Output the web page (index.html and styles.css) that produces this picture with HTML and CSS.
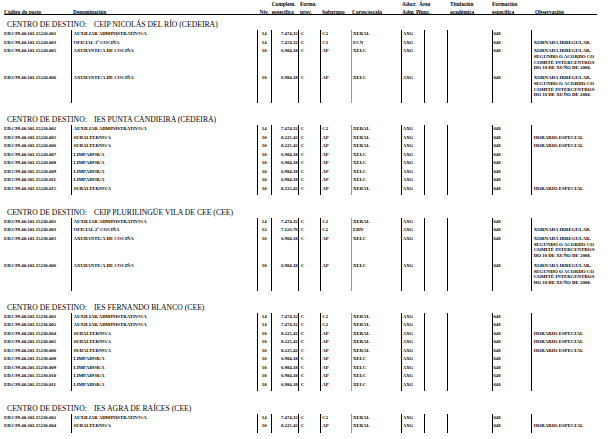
FILE: index.html
```html
<!DOCTYPE html>
<html lang="gl">
<head>
<meta charset="utf-8">
<title>Relación de postos</title>
<link rel="stylesheet" href="styles.css">
</head>
<body>
<div class="page">
  <div class="head">
    <div class="low">Código do posto</div>
    <div class="low">Denominación</div>
    <div class="low">Niv.</div>
    <div>Complem.<br>específico</div>
    <div>Forma<br>prov.</div>
    <div class="low">Subgrupo</div>
    <div class="low">Corpo/escala</div>
    <div>Adscr.<br>Adm. P.</div>
    <div>Área<br>func.</div>
    <div>Titulación<br>académica</div>
    <div>Formación<br>específica</div>
    <div class="low">Observación</div>
  </div>

  <section class="section">
    <h2 class="title"><span class="lbl">CENTRO DE DESTINO:</span>CEIP NICOLÁS DEL RÍO (CEDEIRA)</h2>
    <div class="rows">
      <div>ED.C99.40.101.15220.001</div><div>AUXILIAR ADMINISTRATIVO/A</div><div>14</div><div>7.474,32</div><div>C</div><div>C2</div><div>XERAL</div><div>AXG</div><div></div><div></div><div>648</div><div></div>
      <div>ED.C99.40.101.15220.003</div><div>OFICIAL 1ª COCIÑA</div><div>14</div><div>7.474,32</div><div>C</div><div>C1</div><div>ECN</div><div>AXG</div><div></div><div></div><div>648</div><div>XORNADA IRREGULAR.</div>
      <div>ED.C99.40.101.15220.005</div><div>AXUDANTE/A DE COCIÑA</div><div>10</div><div>6.984,18</div><div>C</div><div>AP</div><div>XELC</div><div>AXG</div><div></div><div></div><div>648</div><div class="multi">XORNADA IRREGULAR,<br>SEGUNDO O ACORDO CO<br>COMITÉ INTERCENTROS<br>DO 10 DE XUÑO DE 2008.</div>
      <div>ED.C99.40.101.15220.006</div><div>AXUDANTE/A DE COCIÑA</div><div>10</div><div>6.984,18</div><div>C</div><div>AP</div><div>XELC</div><div>AXG</div><div></div><div></div><div>648</div><div class="multi">XORNADA IRREGULAR,<br>SEGUNDO O ACORDO CO<br>COMITÉ INTERCENTROS<br>DO 10 DE XUÑO DE 2008.</div>
    </div>
  </section>

  <section class="section">
    <h2 class="title"><span class="lbl">CENTRO DE DESTINO:</span>IES PUNTA CANDIEIRA (CEDEIRA)</h2>
    <div class="rows">
      <div>ED.C99.40.301.15220.002</div><div>AUXILIAR ADMINISTRATIVO/A</div><div>14</div><div>7.474,32</div><div>C</div><div>C2</div><div>XERAL</div><div>AXG</div><div></div><div></div><div>648</div><div></div>
      <div>ED.C99.40.301.15220.005</div><div>SUBALTERNO/A</div><div>10</div><div>8.225,42</div><div>C</div><div>AP</div><div>XERAL</div><div>AXG</div><div></div><div></div><div>648</div><div>HORARIO ESPECIAL</div>
      <div>ED.C99.40.301.15220.006</div><div>SUBALTERNO/A</div><div>10</div><div>8.225,42</div><div>C</div><div>AP</div><div>XERAL</div><div>AXG</div><div></div><div></div><div>648</div><div>HORARIO ESPECIAL</div>
      <div>ED.C99.40.301.15220.007</div><div>LIMPADOR/A</div><div>10</div><div>6.984,18</div><div>C</div><div>AP</div><div>XELC</div><div>AXG</div><div></div><div></div><div>648</div><div></div>
      <div>ED.C99.40.301.15220.008</div><div>LIMPADOR/A</div><div>10</div><div>6.984,18</div><div>C</div><div>AP</div><div>XELC</div><div>AXG</div><div></div><div></div><div>648</div><div></div>
      <div>ED.C99.40.301.15220.009</div><div>LIMPADOR/A</div><div>10</div><div>6.984,18</div><div>C</div><div>AP</div><div>XELC</div><div>AXG</div><div></div><div></div><div>648</div><div></div>
      <div>ED.C99.40.301.15220.011</div><div>LIMPADOR/A</div><div>10</div><div>6.984,18</div><div>C</div><div>AP</div><div>XELC</div><div>AXG</div><div></div><div></div><div>648</div><div></div>
      <div>ED.C99.40.301.15220.015</div><div>SUBALTERNO/A</div><div>10</div><div>8.225,42</div><div>C</div><div>AP</div><div>XERAL</div><div>AXG</div><div></div><div></div><div>648</div><div>HORARIO ESPECIAL</div>
    </div>
  </section>

  <section class="section">
    <h2 class="title"><span class="lbl">CENTRO DE DESTINO:</span>CEIP PLURILINGÜE VILA DE CEE (CEE)</h2>
    <div class="rows">
      <div>ED.C99.40.101.15230.001</div><div>AUXILIAR ADMINISTRATIVO/A</div><div>14</div><div>7.474,32</div><div>C</div><div>C2</div><div>XERAL</div><div>AXG</div><div></div><div></div><div>648</div><div></div>
      <div>ED.C99.40.101.15230.003</div><div>OFICIAL 2ª COCIÑA</div><div>12</div><div>7.123,76</div><div>C</div><div>C2</div><div>EDN</div><div>AXG</div><div></div><div></div><div>648</div><div>XORNADA IRREGULAR.</div>
      <div>ED.C99.40.101.15230.005</div><div>AXUDANTE/A DE COCIÑA</div><div>10</div><div>6.984,18</div><div>C</div><div>AP</div><div>XELC</div><div>AXG</div><div></div><div></div><div>648</div><div class="multi">XORNADA IRREGULAR,<br>SEGUNDO O ACORDO CO<br>COMITÉ INTERCENTROS<br>DO 10 DE XUÑO DE 2008.</div>
      <div>ED.C99.40.101.15230.006</div><div>AXUDANTE/A DE COCIÑA</div><div>10</div><div>6.984,18</div><div>C</div><div>AP</div><div>XELC</div><div>AXG</div><div></div><div></div><div>648</div><div class="multi">XORNADA IRREGULAR,<br>SEGUNDO O ACORDO CO<br>COMITÉ INTERCENTROS<br>DO 10 DE XUÑO DE 2008.</div>
    </div>
  </section>

  <section class="section">
    <h2 class="title"><span class="lbl">CENTRO DE DESTINO:</span>IES FERNANDO BLANCO (CEE)</h2>
    <div class="rows">
      <div>ED.C99.40.201.15230.001</div><div>AUXILIAR ADMINISTRATIVO/A</div><div>14</div><div>7.474,32</div><div>C</div><div>C2</div><div>XERAL</div><div>AXG</div><div></div><div></div><div>648</div><div></div>
      <div>ED.C99.40.201.15230.002</div><div>AUXILIAR ADMINISTRATIVO/A</div><div>14</div><div>7.474,32</div><div>C</div><div>C2</div><div>XERAL</div><div>AXG</div><div></div><div></div><div>648</div><div></div>
      <div>ED.C99.40.201.15230.004</div><div>SUBALTERNO/A</div><div>10</div><div>8.225,42</div><div>C</div><div>AP</div><div>XERAL</div><div>AXG</div><div></div><div></div><div>648</div><div>HORARIO ESPECIAL</div>
      <div>ED.C99.40.201.15230.005</div><div>SUBALTERNO/A</div><div>10</div><div>8.225,42</div><div>C</div><div>AP</div><div>XERAL</div><div>AXG</div><div></div><div></div><div>648</div><div>HORARIO ESPECIAL</div>
      <div>ED.C99.40.201.15230.006</div><div>SUBALTERNO/A</div><div>10</div><div>8.225,42</div><div>C</div><div>AP</div><div>XERAL</div><div>AXG</div><div></div><div></div><div>648</div><div>HORARIO ESPECIAL</div>
      <div>ED.C99.40.201.15230.008</div><div>LIMPADOR/A</div><div>10</div><div>6.984,18</div><div>C</div><div>AP</div><div>XELC</div><div>AXG</div><div></div><div></div><div>648</div><div></div>
      <div>ED.C99.40.201.15230.009</div><div>LIMPADOR/A</div><div>10</div><div>6.984,18</div><div>C</div><div>AP</div><div>XELC</div><div>AXG</div><div></div><div></div><div>648</div><div></div>
      <div>ED.C99.40.201.15230.010</div><div>LIMPADOR/A</div><div>10</div><div>6.984,18</div><div>C</div><div>AP</div><div>XELC</div><div>AXG</div><div></div><div></div><div>648</div><div></div>
      <div>ED.C99.40.201.15230.011</div><div>LIMPADOR/A</div><div>10</div><div>6.984,18</div><div>C</div><div>AP</div><div>XELC</div><div>AXG</div><div></div><div></div><div>648</div><div></div>
    </div>
  </section>

  <section class="section">
    <h2 class="title"><span class="lbl">CENTRO DE DESTINO:</span>IES AGRA DE RAÍCES (CEE)</h2>
    <div class="rows">
      <div>ED.C99.40.301.15230.002</div><div>AUXILIAR ADMINISTRATIVO/A</div><div>14</div><div>7.474,32</div><div>C</div><div>C2</div><div>XERAL</div><div>AXG</div><div></div><div></div><div>648</div><div></div>
      <div>ED.C99.40.301.15230.004</div><div>SUBALTERNO/A</div><div>10</div><div>8.225,42</div><div>C</div><div>AP</div><div>XERAL</div><div>AXG</div><div></div><div></div><div>648</div><div>HORARIO ESPECIAL</div>
    </div>
  </section>
</div>
</body>
</html>
```

FILE: styles.css
```css
html, body {
  margin: 0;
  padding: 0;
  background: #fff;
}

body {
  color: #000;
  font-family: "Liberation Serif", "Times New Roman", serif;
}

.page {
  margin-left: 4px;
  width: 593px;
}

/* column header */
.head {
  display: grid;
  grid-template-columns: 69px 186.5px 12.2px 28.3px 22px 30px 50px 17px 31px 42px 43px 1fr;
  height: 14px;
  border-bottom: 1px solid #000;
  font-size: 5.4px;
  font-weight: bold;
  line-height: 8px;
  white-space: nowrap;
}

.head > .low {
  padding-top: 8px;
}

/* sections */
.section {
  margin-top: 12.3px;
}

.section:first-of-type {
  margin-top: 5px;
}

.title {
  margin: 0 0 1px;
  padding-left: 3px;
  font-size: 7.7px;
  font-weight: normal;
  line-height: 9px;
  white-space: nowrap;
}

.title .lbl {
  display: inline-block;
  width: 87px;
}

.rows {
  display: grid;
  grid-template-columns: 67px 185.7px 14px 27.8px 21.5px 31px 49.7px 23.3px 22.7px 45px 39.3px 66px;
  font-size: 4.8px;
  font-weight: bold;
  line-height: 8.5px;
  white-space: nowrap;
}

.rows > div {
  min-height: 8.5px;
  border-left: 1px solid #000;
}

.rows > div:nth-child(12n+1) {
  border-left: 0;
}

.rows > div:nth-child(12n+2) {
  padding-left: 1.5px;
}

.rows > div:nth-child(12n+3) {
  text-align: center;
}

.rows > div:nth-child(12n+4) {
  text-align: right;
  padding-right: 0.8px;
}

.rows > div:nth-child(12n+5),
.rows > div:nth-child(12n+6) {
  padding-left: 1.3px;
}

.rows > div:nth-child(12n+7) {
  border-left: 1.5px solid #999;
  padding-left: 1px;
}

.rows > div:nth-child(12n+8) {
  padding-left: 1px;
}

.rows > div:nth-child(12n+11) {
  padding-left: 0.8px;
}

.rows > div:nth-child(12n+12) {
  padding-left: 1.7px;
  font-size: 4.9px;
}

.rows > .multi {
  min-height: 0;
  height: 25.55px;
  padding-top: 1.45px;
  line-height: 5.6px;
  white-space: normal;
}

.rows > div:last-child {
  padding-bottom: 2px;
}
```
